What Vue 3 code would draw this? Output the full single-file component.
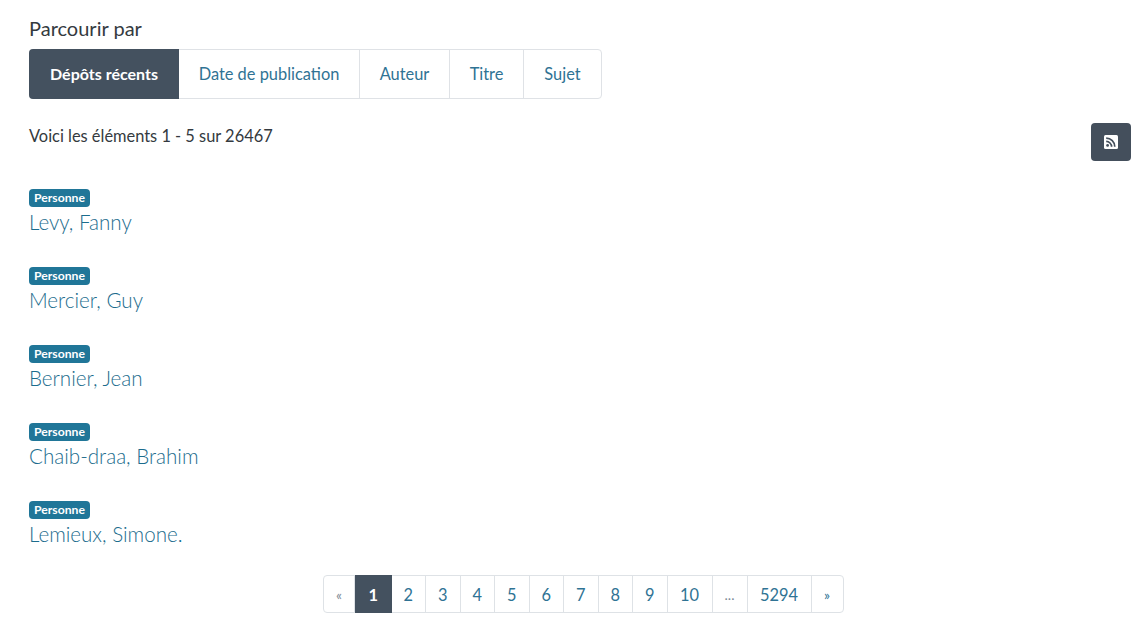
<template>
  <div class="page">
    <h2 class="browse-title">Parcourir par</h2>
    <div class="browse-nav">
      <a v-for="(tab, i) in tabs" :key="tab" class="browse-tab" :class="{ active: i === 0 }">{{ tab }}</a>
    </div>
    <p class="count">Voici les éléments 1 - 5 sur 26467</p>

    <a class="rss" aria-label="RSS">
      <svg viewBox="0 0 14 14" width="14" height="14">
        <rect width="14" height="14" rx="1.5" fill="#fff" />
        <circle cx="3.6" cy="10.4" r="1.4" fill="#444f5c" />
        <path d="M2.2 6.4a5.4 5.4 0 0 1 5.4 5.4M2.2 3.2a8.6 8.6 0 0 1 8.6 8.6" fill="none" stroke="#444f5c" stroke-width="1.7" />
      </svg>
    </a>

    <ul class="results">
      <li v-for="name in people" :key="name" class="result">
        <span class="badge">Personne</span>
        <a class="name">{{ name }}</a>
      </li>
    </ul>

    <nav class="pager">
      <a v-for="p in pages" :key="p.label" class="page-link" :class="p.kind">{{ p.label }}</a>
    </nav>
  </div>
</template>

<script setup>
const tabs = ['Dépôts récents', 'Date de publication', 'Auteur', 'Titre', 'Sujet']
const people = ['Levy, Fanny', 'Mercier, Guy', 'Bernier, Jean', 'Chaib-draa, Brahim', 'Lemieux, Simone.']
const pages = [
  { label: '«', kind: 'muted' },
  { label: '1', kind: 'current' },
  ...['2', '3', '4', '5', '6', '7', '8', '9', '10'].map((label) => ({ label, kind: '' })),
  { label: '...', kind: 'muted' },
  { label: '5294', kind: '' },
  { label: '»', kind: 'edge' }
]
</script>

<style>
html, body {
  margin: 0;
  background: #fff;
}
</style>

<style scoped>
.page {
  position: relative;
  height: 634px;
  overflow: hidden;
  padding: 17px 0 0 29px;
  box-sizing: border-box;
  font-family: "Lato", "Noto Sans", sans-serif;
  color: #343a40;
}
.browse-title {
  margin: 0 0 9px;
  font-size: 20px;
  line-height: 23px;
  font-weight: 400;
}
.browse-nav {
  display: inline-flex;
  height: 50px;
  box-sizing: border-box;
  border: 1px solid #dfe2e6;
  border-radius: 4px;
  vertical-align: top;
}
.browse-tab {
  display: flex;
  align-items: center;
  justify-content: center;
  padding-bottom: 2px;
  box-sizing: border-box;
  border-right: 1px solid #dfe2e6;
  font-size: 16.4px;
  color: #2f7394;
  white-space: nowrap;
}
.browse-tab:nth-child(1) { width: 150px; margin: -1px 0 -1px -1px; }
.browse-tab:nth-child(2) { width: 181px; }
.browse-tab:nth-child(3) { width: 90px; }
.browse-tab:nth-child(4) { width: 74px; }
.browse-tab:nth-child(5) { width: 77px; border-right: 0; }
.browse-tab.active {
  background: #44515f;
  color: #fff;
  font-weight: 700;
  font-size: 16px;
  border-right: 0;
  border-radius: 4px 0 0 4px;
}
.count {
  margin: 27px 0 0;
  font-size: 16.4px;
  line-height: 20px;
}
.rss {
  position: absolute;
  top: 123px;
  right: 14px;
  width: 40px;
  height: 38px;
  padding-right: 1px;
  box-sizing: border-box;
  display: flex;
  align-items: center;
  justify-content: center;
  background: #444f5c;
  border-radius: 4px;
}
.results {
  list-style: none;
  margin: 43px 0 0;
  padding: 0;
  display: flex;
  flex-direction: column;
  gap: 25px;
}
.result {
  display: flex;
  flex-direction: column;
  align-items: flex-start;
  height: 53px;
}
.badge {
  height: 18px;
  line-height: 18px;
  padding: 0 5px;
  border-radius: 4px;
  background: #207698;
  color: #fff;
  font-size: 12.2px;
  font-weight: 700;
}
.name {
  font-size: 20.6px;
  line-height: 31px;
  font-weight: 300;
  color: #1b6c8d;
}
.pager {
  position: absolute;
  top: 575px;
  left: 323px;
  display: flex;
  height: 38px;
  box-sizing: border-box;
  border: 1px solid #dee2e6;
  border-radius: 4px;
}
.page-link {
  display: flex;
  align-items: center;
  justify-content: center;
  box-sizing: border-box;
  width: 34.5px;
  border-right: 1px solid #dee2e6;
  font-size: 16.4px;
  color: #2f7394;
}
.page-link:nth-child(1) { width: 31px; }
.page-link:nth-child(2) { width: 36.5px; margin: -1px 0; }
.page-link:nth-child(11) { width: 45px; }
.page-link:nth-child(12) { width: 35px; }
.page-link:nth-child(13) { width: 64px; }
.page-link:nth-child(14) { width: 31px; border-right: 0; font-size: 14px; }
.page-link.muted {
  color: #7d8a96;
  font-size: 14px;
}
.page-link.current {
  background: #44515f;
  color: #fff;
  font-weight: 700;
  border-right: 0;
}
</style>
